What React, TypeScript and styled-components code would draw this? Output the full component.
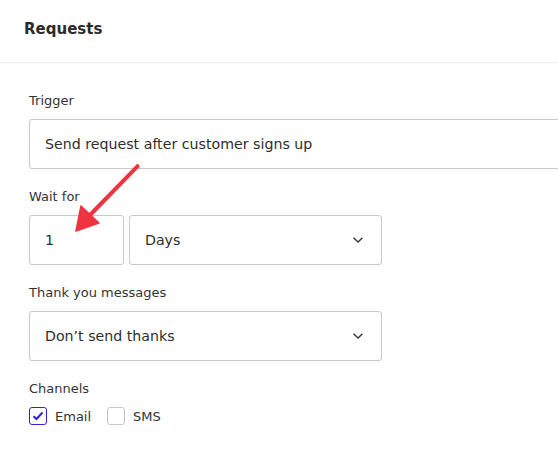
import React from "react";
import styled, { createGlobalStyle } from "styled-components";

const Global = createGlobalStyle`
  html, body { margin: 0; padding: 0; background: #fff; }
  body { font-family: "DejaVu Sans", "Open Sans", sans-serif; color: #333; overflow: hidden; }
`;

const Page = styled.div`
  position: relative;
  width: 558px;
  height: 458px;
  overflow: hidden;
`;

const Header = styled.div`
  box-sizing: border-box;
  height: 63px;
  border-bottom: 1px solid #ebebeb;
  display: flex;
  align-items: center;
  padding-left: 24px;
`;

const Title = styled.h1`
  margin: -4px 0 0;
  font-size: 15px;
  font-weight: 700;
  color: #2b2b2b;
`;

const Form = styled.div`
  padding: 29px 0 0 29px;
  display: flex;
  flex-direction: column;
`;

const Field = styled.div`
  display: flex;
  flex-direction: column;
  margin-bottom: 19px;
`;

const Label = styled.div`
  font-size: 13px;
  line-height: 18px;
  margin-bottom: 9px;
  color: #333;
`;

const Row = styled.div`
  display: flex;
  gap: 5px;
`;

const Box = styled.div<{ $w: number }>`
  box-sizing: border-box;
  width: ${(p) => p.$w}px;
  flex: none;
  height: 50px;
  border: 1px solid #c8c8c8;
  border-radius: 3px;
  display: flex;
  align-items: center;
  justify-content: space-between;
  padding: 0 17px 0 15px;
  font-size: 14.2px;
  color: #2e2e2e;
`;

const Chevron = () => (
  <svg width="12" height="8" viewBox="0 0 12 8">
    <path d="M1.5 1.8 L6 6 L10.5 1.8" fill="none" stroke="#3a3a3a" strokeWidth="1.5" />
  </svg>
);

const Checks = styled.div`
  display: flex;
  align-items: center;
`;

const CheckItem = styled.label`
  display: flex;
  align-items: center;
  gap: 8px;
  font-size: 13px;
  margin-right: 16px;
  color: #333;
`;

const CheckBox = styled.span<{ $on?: boolean }>`
  box-sizing: border-box;
  width: 18px;
  height: 18px;
  border-radius: 3px;
  border: 1px solid ${(p) => (p.$on ? "#2f22d8" : "#c8c8c8")};
  display: flex;
  align-items: center;
  justify-content: center;
`;

const Arrow = styled.svg`
  position: absolute;
  left: 0;
  top: 0;
  pointer-events: none;
`;

export default function App() {
  return (
    <Page>
      <Global />
      <Header>
        <Title>Requests</Title>
      </Header>
      <Form>
        <Field>
          <Label>Trigger</Label>
          <Box $w={600}>Send request after customer signs up</Box>
        </Field>
        <Field>
          <Label>Wait for</Label>
          <Row>
            <Box $w={95}>1</Box>
            <Box $w={253}>
              Days <Chevron />
            </Box>
          </Row>
        </Field>
        <Field>
          <Label>Thank you messages</Label>
          <Box $w={353}>
            Don’t send thanks <Chevron />
          </Box>
        </Field>
        <Field>
          <Label>Channels</Label>
          <Checks>
            <CheckItem>
              <CheckBox $on>
                <svg width="12" height="10" viewBox="0 0 12 10">
                  <path d="M1.5 5.2 L4.5 8 L10.5 1.5" fill="none" stroke="#2f22d8" strokeWidth="2" />
                </svg>
              </CheckBox>
              Email
            </CheckItem>
            <CheckItem>
              <CheckBox />
              SMS
            </CheckItem>
          </Checks>
        </Field>
      </Form>
      <Arrow width="558" height="458" viewBox="0 0 558 458">
        <path d="M137.5 163.5 L140 166.5 L92 216 L89 213 Z" fill="#ef3340" />
        <path d="M76 231 L81 206 L99 223 Z" fill="#ef3340" stroke="#ef3340" strokeWidth="1.5" strokeLinejoin="round" />
      </Arrow>
    </Page>
  );
}
